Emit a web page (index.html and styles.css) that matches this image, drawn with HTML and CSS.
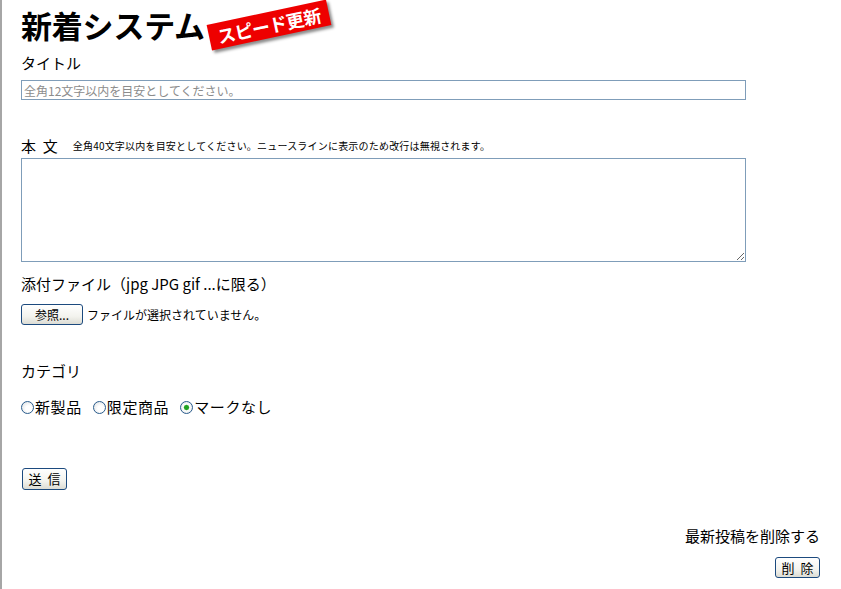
FILE: index.html
```html
<!DOCTYPE html>
<html lang="ja">
<head>
<meta charset="utf-8">
<title>新着システム</title>
<link rel="stylesheet" href="styles.css">
</head>
<body>
<div class="page">
  <header class="head">
    <h1 class="title">新着システム</h1>
    <span class="badge">スピード更新</span>
  </header>
  <form class="form">
    <div class="lbl lbl-title">タイトル</div>
    <input class="field" type="text" placeholder="全角12文字以内を目安としてください。">

    <div class="lbl lbl-body">本&nbsp;&nbsp;文<span class="note">全角40文字以内を目安としてください。ニュースラインに表示のため改行は無視されます。</span></div>
    <textarea class="area"></textarea>

    <div class="lbl lbl-file">添付ファイル（jpg JPG gif ...に限る）</div>
    <div class="file-row">
      <span class="btn btn-browse">参照...</span>
      <span class="file-status">ファイルが選択されていません。</span>
    </div>

    <div class="lbl lbl-cat">カテゴリ</div>
    <div class="radios">
      <label class="opt"><input class="rad" type="radio" name="cat">新製品</label>
      <label class="opt"><input class="rad" type="radio" name="cat">限定商品</label>
      <label class="opt"><input class="rad" type="radio" name="cat" checked>マークなし</label>
    </div>

    <div class="submit-row"><button type="button" class="btn btn-send">送&nbsp;&nbsp;信</button></div>

    <div class="delete-block">
      <div class="lbl lbl-del">最新投稿を削除する</div>
      <button type="button" class="btn btn-del">削&nbsp;&nbsp;除</button>
    </div>
  </form>
</div>
</body>
</html>
```

FILE: styles.css
```css
html, body {
  margin: 0;
  padding: 0;
  background: #fff;
}
body {
  font-family: "Noto Sans CJK JP", "Noto Sans", sans-serif;
  color: #000;
}
.page {
  min-height: 589px;
  box-sizing: border-box;
  border-left: 2px solid #a6a6a6;
  padding-left: 19px;
  padding-right: 21px;
}
.head {
  position: relative;
  height: 50px;
}
.title {
  margin: 0;
  padding-top: 6px;
  font-size: 31px;
  line-height: 38px;
  font-weight: bold;
  letter-spacing: -0.2px;
}
.badge {
  position: absolute;
  left: 187px;
  top: 12px;
  width: 122px;
  height: 26px;
  background: #ee0000;
  color: #fff;
  font-weight: bold;
  font-size: 18px;
  line-height: 26px;
  text-align: center;
  letter-spacing: -0.5px;
  transform: rotate(-12deg);
  box-shadow: 2px 3px 3px rgba(0,0,0,0.45);
}
.form {
  display: flex;
  flex-direction: column;
  align-items: flex-start;
}
.lbl {
  font-size: 15px;
  line-height: 20px;
  height: 20px;
  white-space: nowrap;
}
.lbl-title { margin-top: 3px; }
.field {
  margin-top: 7px;
  box-sizing: border-box;
  width: 725px;
  height: 20px;
  border: 1px solid #7f9db9;
  padding: 0 2px;
  font-family: inherit;
  font-size: 12px;
  outline: none;
}
.field::placeholder { color: #8c8c8c; }
.lbl-body { margin-top: 36px; }
.note {
  font-size: 10px;
  margin-left: 15px;
  letter-spacing: 0.2px;
  vertical-align: 2px;
}
.area {
  margin: 2px 0 0 0;
  box-sizing: border-box;
  width: 725px;
  height: 104px;
  border: 1px solid #7f9db9;
  resize: both;
  font-family: inherit;
}
.lbl-file { margin-top: 12px; }
.file-row {
  margin-top: 10px;
  display: flex;
  align-items: center;
  gap: 4px;
  height: 21px;
}
.btn {
  box-sizing: border-box;
  border: 1px solid #1c4a7e;
  border-radius: 3px;
  background: linear-gradient(#ffffff, #f3f3ee 60%, #dcdcd4);
  font-family: inherit;
  font-size: 12px;
  color: #000;
  padding: 0;
  display: inline-flex;
  align-items: center;
  justify-content: center;
}
.btn-browse {
  width: 62px;
  height: 21px;
}
.file-status {
  font-size: 12px;
}
.lbl-cat { margin-top: 36px; }
.radios {
  margin-top: 16px;
  display: flex;
  align-items: center;
  height: 20px;
  gap: 11px;
}
.opt {
  display: flex;
  align-items: center;
  font-size: 15px;
  line-height: 20px;
  letter-spacing: 0.6px;
}
.rad {
  appearance: none;
  -webkit-appearance: none;
  margin: 0 1px 0 0;
  width: 13px;
  height: 13px;
  border-radius: 50%;
  border: 1px solid #2a5c8c;
  background: radial-gradient(circle at 60% 60%, #ffffff 30%, #d8dcdf 100%);
  box-sizing: border-box;
}
.rad:checked {
  background: radial-gradient(circle, #21a121 0 2px, #7fd07f 2.6px, #ffffff 3.2px, #d8dcdf 100%);
}
.submit-row { margin-top: 48px; }
.btn-send {
  width: 45px;
  height: 22px;
  margin-left: 1px;
  font-size: 13px;
}
.delete-block {
  align-self: stretch;
  display: flex;
  flex-direction: column;
  align-items: flex-end;
  margin-top: 36px;
}
.btn-del {
  margin-top: 11px;
  width: 45px;
  height: 21px;
  font-size: 13px;
}
```
